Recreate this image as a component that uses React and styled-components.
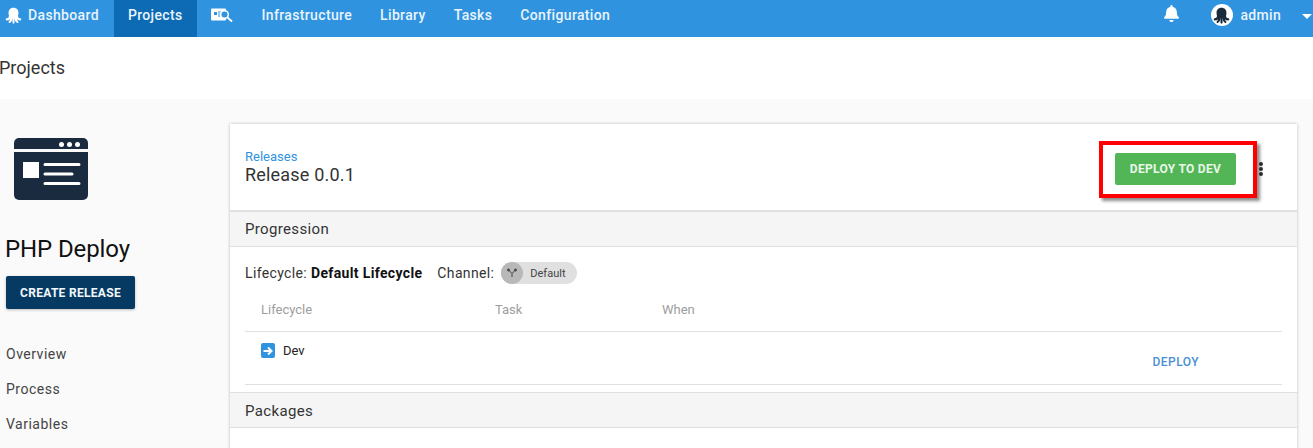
import React from 'react';
import styled, { createGlobalStyle } from 'styled-components';
import { FaBell } from 'react-icons/fa';

const GlobalStyle = createGlobalStyle`
  html, body {
    margin: 0;
    padding: 0;
    height: 100%;
    overflow: hidden;
    background: #fafafa;
    font-family: Roboto, "Liberation Sans", sans-serif;
  }
`;

const Page = styled.div`
  width: 1313px;
  height: 448px;
  overflow: hidden;
  display: flex;
  flex-direction: column;
`;

const NavBar = styled.nav`
  flex: none;
  height: 37px;
  background: #2f93e0;
  display: flex;
  align-items: stretch;
  color: #fff;
  padding-right: 1px;
`;

const NavItem = styled.a`
  display: flex;
  align-items: center;
  gap: 6px;
  padding: ${(p) => p.$padding || '0 14px'};
  padding-bottom: 7px;
  font-size: 14px;
  font-weight: 500;
  letter-spacing: 0.35px;
  background: ${(p) => (p.$active ? '#0d6ab5' : 'transparent')};
  color: #e9f4fc;
`;

const NavRight = styled.div`
  margin-left: auto;
  display: flex;
  align-items: center;
  padding-bottom: 7px;
`;

const BellButton = styled.span`
  display: flex;
  margin-right: 31px;
  margin-bottom: 4px;
`;

const Avatar = styled.span`
  width: 22px;
  height: 22px;
  border-radius: 50%;
  background: #fff;
  display: flex;
  align-items: center;
  justify-content: center;
  margin-right: 8px;
`;

const UserName = styled.span`
  font-size: 14px;
  font-weight: 500;
  letter-spacing: 0.3px;
  color: #e9f4fc;
  margin-right: 21px;
`;

const Caret = styled.span`
  width: 0;
  height: 0;
  margin-top: 3px;
  border-left: 5px solid transparent;
  border-right: 5px solid transparent;
  border-top: 5px solid #fff;
`;

const TitleBar = styled.header`
  flex: none;
  height: 62px;
  background: #fff;
  display: flex;
  align-items: center;
`;

const PageTitle = styled.h1`
  margin: 0 0 1px -1px;
  font-size: 18px;
  font-weight: 400;
  color: #333;
`;

const Body = styled.div`
  flex: 1;
  display: flex;
  min-height: 0;
  padding-top: 25px;
`;

const Sidebar = styled.aside`
  flex: none;
  width: 230px;
  padding: 14px 0 0 6px;
  box-sizing: border-box;
`;

const ProjectLogo = styled.svg`
  display: block;
  margin-left: 8px;
  width: 74px;
  height: 62px;
`;

const ProjectName = styled.h2`
  margin: 35px 0 0 -1px;
  font-size: 24px;
  line-height: 28px;
  font-weight: 400;
  letter-spacing: -0.1px;
  color: #111;
`;

const CreateButton = styled.button`
  display: block;
  margin-top: 13px;
  padding: 0;
  width: 129px;
  height: 33px;
  border: 0;
  border-radius: 2px;
  background: #063a63;
  color: #f2f7fb;
  font: 700 12px Roboto, sans-serif;
  letter-spacing: 0.3px;
  box-shadow: 0 1px 3px rgba(0, 0, 0, 0.25);
`;

const SideMenu = styled.ul`
  list-style: none;
  margin: 36px 0 0;
  padding: 0;
  display: flex;
  flex-direction: column;
  gap: 17px;
`;

const SideLink = styled.li`
  font-size: 14px;
  line-height: 18px;
  color: #444;
  letter-spacing: 0.5px;
`;

const Card = styled.main`
  flex: none;
  width: 1067px;
  background: #fff;
  box-shadow: 0 0 3px rgba(0, 0, 0, 0.25);
  align-self: flex-start;
  height: 400px;
`;

const CardHeader = styled.div`
  height: 86px;
  display: flex;
  align-items: center;
  padding: 0 34px 0 15px;
  box-sizing: border-box;
`;

const Crumbs = styled.div`
  flex: 1;
  padding-top: 1px;
`;

const CrumbLink = styled.a`
  display: block;
  font-size: 13px;
  line-height: 14px;
  color: #2f93e0;
`;

const ReleaseTitle = styled.div`
  font-size: 18px;
  line-height: 22px;
  color: #333;
  letter-spacing: 0.2px;
`;

const DeployWrap = styled.div`
  position: relative;
  margin-right: 23px;
  margin-top: 3px;
`;

const DeployButton = styled.button`
  display: block;
  padding: 0;
  width: 121px;
  height: 32px;
  border: 0;
  border-radius: 2px;
  background: #52b656;
  color: #eaf6ea;
  font: 700 12px Roboto, sans-serif;
  letter-spacing: 0.3px;
`;

const Highlight = styled.span`
  position: absolute;
  left: -16px;
  top: -12px;
  box-sizing: border-box;
  width: 158px;
  height: 57px;
  border: 4px solid #f00;
  box-shadow: 3px 3px 3px rgba(0, 0, 0, 0.45);
`;

const MoreDots = styled.span`
  display: flex;
  flex-direction: column;
  gap: 1px;
  margin-top: 3px;
`;

const Dot = styled.i`
  display: block;
  width: 4px;
  height: 4px;
  border-radius: 50%;
  background: #333;
`;

const SectionHead = styled.div`
  box-sizing: border-box;
  height: ${(p) => (p.$first ? 37 : 36)}px;
  display: flex;
  align-items: center;
  padding: ${(p) => (p.$first ? 0 : 2)}px 0 0 15px;
  background: #f5f5f5;
  border-top: ${(p) => (p.$first ? 2 : 1)}px solid #e0e0e0;
  border-bottom: 1px solid #e0e0e0;
  font-size: 15px;
  color: #333;
  letter-spacing: 0.35px;
`;

const SectionBody = styled.div`
  padding: 14px 15px 0;
  height: 145px;
  box-sizing: border-box;
`;

const MetaRow = styled.div`
  display: flex;
  align-items: center;
  height: 24px;
  font-size: 14px;
  color: #333;
  letter-spacing: 0.35px;
`;

const MetaValue = styled.strong`
  font-weight: 700;
  color: #111;
  margin-left: 4px;
  margin-right: 15px;
`;

const Chip = styled.span`
  display: flex;
  align-items: center;
  height: 22px;
  width: 76px;
  margin-left: 7px;
  border-radius: 11px;
  background: #e0e0e0;
  font-size: 11px;
  letter-spacing: 0;
  color: #444;
`;

const ChipIcon = styled.span`
  width: 22px;
  height: 22px;
  border-radius: 50%;
  background: #b8b8b8;
  display: flex;
  align-items: center;
  justify-content: center;
  margin-right: 7px;
`;

const TableHead = styled.div`
  display: grid;
  grid-template-columns: 234px 167px 1fr;
  height: 47px;
  padding: 2px 16px 0;
  align-items: center;
  font-size: 13px;
  color: #9e9e9e;
  border-bottom: 1px solid #e0e0e0;
  box-sizing: border-box;
`;

const TableRow = styled.div`
  height: 53px;
  padding: 0 83px 0 16px;
  display: flex;
  justify-content: space-between;
  border-bottom: 1px solid #e0e0e0;
  box-sizing: border-box;
`;

const PhaseName = styled.div`
  display: flex;
  align-items: center;
  gap: 8px;
  height: 37px;
  font-size: 13px;
  font-weight: 400;
  color: #222;
`;

const PhaseIcon = styled.span`
  width: 14px;
  height: 15px;
  border-radius: 2px;
  background: #2f93e0;
  display: flex;
  align-items: center;
  justify-content: center;
`;

const DeployLink = styled.a`
  align-self: flex-end;
  margin-bottom: 15px;
  font-size: 12px;
  font-weight: 500;
  letter-spacing: 0.45px;
  color: #4a8fd6;
`;

const Octopus = ({ color, size }) => (
  <svg width={size} height={size} viewBox="0 0 24 24" fill={color} stroke={color} strokeLinecap="round">
    <path stroke="none" d="M12 1C7.500 1 5 4.200 5 8c0 3.500 1.200 5.500 1.200 7.500h11.600C17.800 13.500 19 11.500 19 8c0-3.800-2.500-7-7-7z" />
    <path fill="none" strokeWidth="3" d="M7 13c0 3-2 4.500-4.500 4.500M9 15c0 3-.8 5-2.500 6M12 15v7M15 15c0 3 .8 5 2.500 6M17 13c0 3 2 4.500 4.500 4.500" />
  </svg>
);

const InfraIcon = () => (
  <svg width="22" height="15" viewBox="0 0 22 15">
    <rect x="0" y="0.500" width="15" height="12" rx="1" fill="#fff" />
    <rect x="3" y="4" width="3" height="3" fill="#2f93e0" />
    <path d="M7 4h3M7 6h2M7 8h2" stroke="#2f93e0" strokeWidth="1" />
    <circle cx="13.500" cy="6.500" r="3.800" fill="#2f93e0" stroke="#fff" strokeWidth="1.500" />
    <path d="M16.500 9.500l4.500 4" stroke="#fff" strokeWidth="1.800" />
  </svg>
);

const navLinks = ['Infrastructure', 'Library', 'Tasks', 'Configuration'];
const sideLinks = ['Overview', 'Process', 'Variables'];

export default function App() {
  return (
    <Page>
      <GlobalStyle />
      <NavBar>
        <NavItem $padding="0 15px 0 5px">
          <Octopus color="#fff" size={17} />
          Dashboard
        </NavItem>
        <NavItem $active>Projects</NavItem>
        <NavItem $padding="0 15px 0 14px">
          <InfraIcon />
        </NavItem>
        {navLinks.map((label) => (
          <NavItem key={label}>{label}</NavItem>
        ))}
        <NavRight>
          <BellButton>
            <FaBell size={17} color="#fff" />
          </BellButton>
          <Avatar>
            <Octopus color="#1a2b3c" size={17} />
          </Avatar>
          <UserName>admin</UserName>
          <Caret />
        </NavRight>
      </NavBar>
      <TitleBar>
        <PageTitle>Projects</PageTitle>
      </TitleBar>
      <Body>
        <Sidebar>
          <ProjectLogo viewBox="0 0 74 62">
            <path d="M5 0h64a5 5 0 0 1 5 5v6H0V5a5 5 0 0 1 5-5z" fill="#1a2b3f" />
            <path d="M0 14h74v43a5 5 0 0 1-5 5H5a5 5 0 0 1-5-5z" fill="#1a2b3f" />
            <circle cx="47.500" cy="6.500" r="2.500" fill="#fff" />
            <circle cx="55.500" cy="6.500" r="2.500" fill="#fff" />
            <circle cx="63.500" cy="6.500" r="2.500" fill="#fff" />
            <rect x="9" y="24" width="16" height="16" fill="#fff" />
            <path d="M31 26.500h34M31 36h27M31 45.500h34" stroke="#fff" strokeWidth="3" strokeLinecap="round" />
          </ProjectLogo>
          <ProjectName>PHP Deploy</ProjectName>
          <CreateButton>CREATE RELEASE</CreateButton>
          <SideMenu>
            {sideLinks.map((label) => (
              <SideLink key={label}>{label}</SideLink>
            ))}
          </SideMenu>
        </Sidebar>
        <Card>
          <CardHeader>
            <Crumbs>
              <CrumbLink>Releases</CrumbLink>
              <ReleaseTitle>Release 0.0.1</ReleaseTitle>
            </Crumbs>
            <DeployWrap>
              <DeployButton>DEPLOY TO DEV</DeployButton>
              <Highlight />
            </DeployWrap>
            <MoreDots>
              <Dot />
              <Dot />
              <Dot />
            </MoreDots>
          </CardHeader>
          <SectionHead $first>Progression</SectionHead>
          <SectionBody>
            <MetaRow>
              Lifecycle:
              <MetaValue>Default Lifecycle</MetaValue>
              Channel:
              <Chip>
                <ChipIcon>
                  <svg width="12" height="12" viewBox="0 0 12 12" fill="#444" stroke="#444" strokeWidth="1">
                    <path fill="none" d="M2.500 3L6 6.500 9.500 3M6 6.500V10" />
                    <circle cx="2.500" cy="3" r="1" />
                    <circle cx="9.500" cy="3" r="1" />
                  </svg>
                </ChipIcon>
                Default
              </Chip>
            </MetaRow>
            <TableHead>
              <span>Lifecycle</span>
              <span>Task</span>
              <span>When</span>
            </TableHead>
            <TableRow>
              <PhaseName>
                <PhaseIcon>
                  <svg width="10" height="10" viewBox="0 0 10 10" fill="none" stroke="#fff" strokeWidth="2">
                    <path d="M0.500 5h7M5 1.500L8.500 5 5 8.500" />
                  </svg>
                </PhaseIcon>
                Dev
              </PhaseName>
              <DeployLink>DEPLOY</DeployLink>
            </TableRow>
          </SectionBody>
          <SectionHead>Packages</SectionHead>
        </Card>
      </Body>
    </Page>
  );
}
